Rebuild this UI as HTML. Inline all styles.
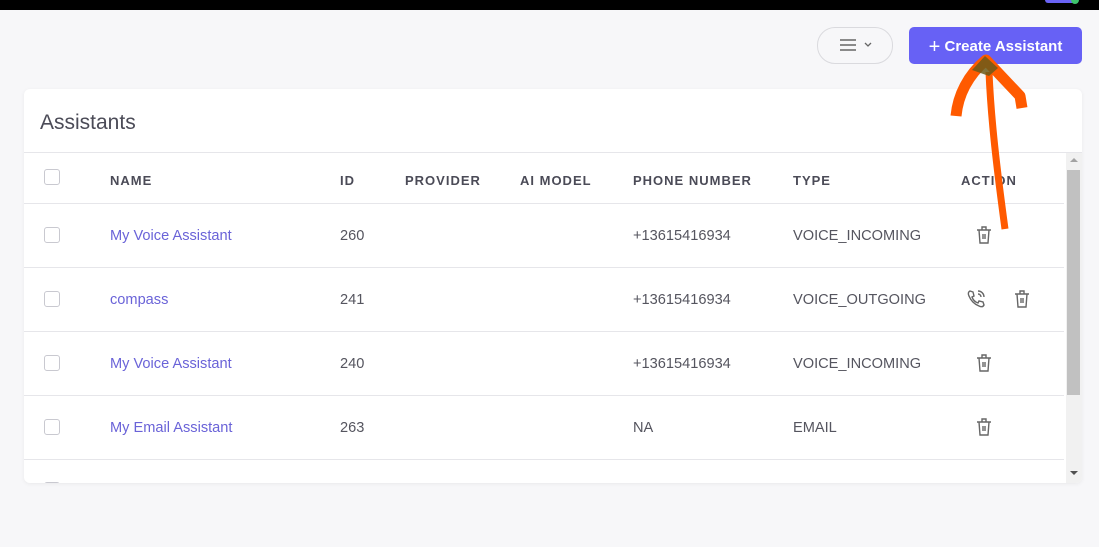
<!DOCTYPE html>
<html><head><style>
body{margin:0;width:1099px;height:547px;background:#f7f7f9;font-family:"Liberation Sans",sans-serif;position:relative;overflow:hidden}
.top{position:absolute;left:0;top:0;width:1099px;height:10px;background:#000}
.a{position:absolute}
.card{position:absolute;left:24px;top:89px;width:1058px;height:394px;background:#fff;border-radius:6px;box-shadow:0 1px 4px rgba(0,0,0,.06);overflow:hidden}
.h{position:absolute;font-size:13px;font-weight:bold;letter-spacing:1px;color:#4b4b57;top:84px}
.cell{position:absolute;font-size:14.6px;color:#55555f}
.name{color:#6a63d8}
.cb{position:absolute;left:20px;width:14px;height:14px;border:1.5px solid #c9c9d0;border-radius:3px}
.line{position:absolute;left:0;width:1040px;height:1px;background:#e6e6ea}
</style></head><body>
<div class="top"></div>
<div class="a" style="left:1045px;top:0;width:30px;height:3px;background:#6a63f5;border-radius:0 0 4px 4px"></div>
<div class="a" style="left:1071px;top:0;width:8px;height:4px;background:#3ec46d;border-radius:0 0 4px 4px"></div>
<div class="a" style="left:817px;top:27px;width:74px;height:35px;border:1px solid #dadade;border-radius:18px;background:#f7f7f9"></div>
<svg class="a" style="left:838px;top:38px" width="40" height="14"><path d="M2 2h16M2 7h16M2 12h16" stroke="#666" stroke-width="1.5"/><path d="M27 5l3 3 3-3" stroke="#666" fill="none" stroke-width="1.3"/></svg>
<div class="a" style="left:909px;top:27px;width:173px;height:37px;background:#6761f5;border-radius:5px;color:#fff;font-size:15px;font-weight:bold;line-height:39px;text-align:center"><span style="font-weight:normal;font-size:20px;vertical-align:-2px">+</span> Create Assistant</div>
<div class="card">
<div class="a" style="left:16px;top:22px;font-size:21px;color:#4b4b57">Assistants</div>
<div class="line" style="top:63px;width:1058px"></div>
<div class="cb" style="top:80px"></div>
<div class="h" style="left:86px">NAME</div><div class="h" style="left:316px">ID</div><div class="h" style="left:381px">PROVIDER</div><div class="h" style="left:496px">AI MODEL</div><div class="h" style="left:609px">PHONE NUMBER</div><div class="h" style="left:769px">TYPE</div><div class="h" style="left:937px">ACTION</div>
<div class="line" style="top:114px"></div>
<div class="line" style="top:178px"></div>
<div class="line" style="top:242px"></div>
<div class="line" style="top:306px"></div>
<div class="line" style="top:370px"></div>
<div class="cb" style="top:138px"></div><div class="cell name" style="left:86px;top:139px">My Voice Assistant</div><div class="cell" style="left:316px;top:139px">260</div><div class="cell" style="left:609px;top:139px">+13615416934</div><div class="cell" style="left:769px;top:139px">VOICE_INCOMING</div>
<div class="cb" style="top:202px"></div><div class="cell name" style="left:86px;top:203px">compass</div><div class="cell" style="left:316px;top:203px">241</div><div class="cell" style="left:609px;top:203px">+13615416934</div><div class="cell" style="left:769px;top:203px">VOICE_OUTGOING</div>
<div class="cb" style="top:266px"></div><div class="cell name" style="left:86px;top:267px">My Voice Assistant</div><div class="cell" style="left:316px;top:267px">240</div><div class="cell" style="left:609px;top:267px">+13615416934</div><div class="cell" style="left:769px;top:267px">VOICE_INCOMING</div>
<div class="cb" style="top:330px"></div><div class="cell name" style="left:86px;top:331px">My Email Assistant</div><div class="cell" style="left:316px;top:331px">263</div><div class="cell" style="left:609px;top:331px">NA</div><div class="cell" style="left:769px;top:331px">EMAIL</div>
<div class="cb" style="top:393px"></div>
<svg class="a" style="left:951px;top:136px" width="18" height="20"><g fill="none" stroke="#666" stroke-width="1.4"><path d="M2 5h14M7 5V2h4v3M4 5l1 13h8l1-13M8 9v5M10 9v5"/></g></svg>
<svg class="a" style="left:989px;top:200px" width="18" height="20"><g fill="none" stroke="#666" stroke-width="1.4"><path d="M2 5h14M7 5V2h4v3M4 5l1 13h8l1-13M8 9v5M10 9v5"/></g></svg>
<svg class="a" style="left:942px;top:200px" width="20" height="20"><g fill="none" stroke="#666" stroke-width="1.4"><path d="M4 2l3 1 1 4-2 1c1 3 3 5 6 6l1-2 4 1 1 3c-1 2-3 2-5 1C8 15 5 12 3 7 2 5 2 3 4 2z"/><path d="M12 2a6 6 0 0 1 6 6M12 5a3 3 0 0 1 3 3"/></g></svg>
<svg class="a" style="left:951px;top:264px" width="18" height="20"><g fill="none" stroke="#666" stroke-width="1.4"><path d="M2 5h14M7 5V2h4v3M4 5l1 13h8l1-13M8 9v5M10 9v5"/></g></svg>
<svg class="a" style="left:951px;top:328px" width="18" height="20"><g fill="none" stroke="#666" stroke-width="1.4"><path d="M2 5h14M7 5V2h4v3M4 5l1 13h8l1-13M8 9v5M10 9v5"/></g></svg>
<div class="a" style="left:1042px;top:64px;width:16px;height:330px;background:#f1f1f1"></div>
<div class="a" style="left:1043px;top:81px;width:13px;height:225px;background:#c1c1c1"></div>
<svg class="a" style="left:1045px;top:68px" width="10" height="6"><path d="M1 5l4-4 4 4z" fill="#a3a3a3"/></svg>
<svg class="a" style="left:1045px;top:381px" width="10" height="6"><path d="M1 1l4 4 4-4z" fill="#505050"/></svg>
</div>
<svg class="a" style="left:0;top:0" width="1099" height="547"><g fill="none" stroke="#ff5a00" stroke-linecap="butt" stroke-linejoin="round"><path d="M956 116C958 95 968 75 986 60L1020 96 1022 108" stroke-width="11"/><path d="M989 72C991 120 997 170 1005 229" stroke-width="7"/></g><path d="M972 70 985 56 998 68 989 76z" fill="#6b5a1a" opacity=".85"/></svg>
</body></html>
